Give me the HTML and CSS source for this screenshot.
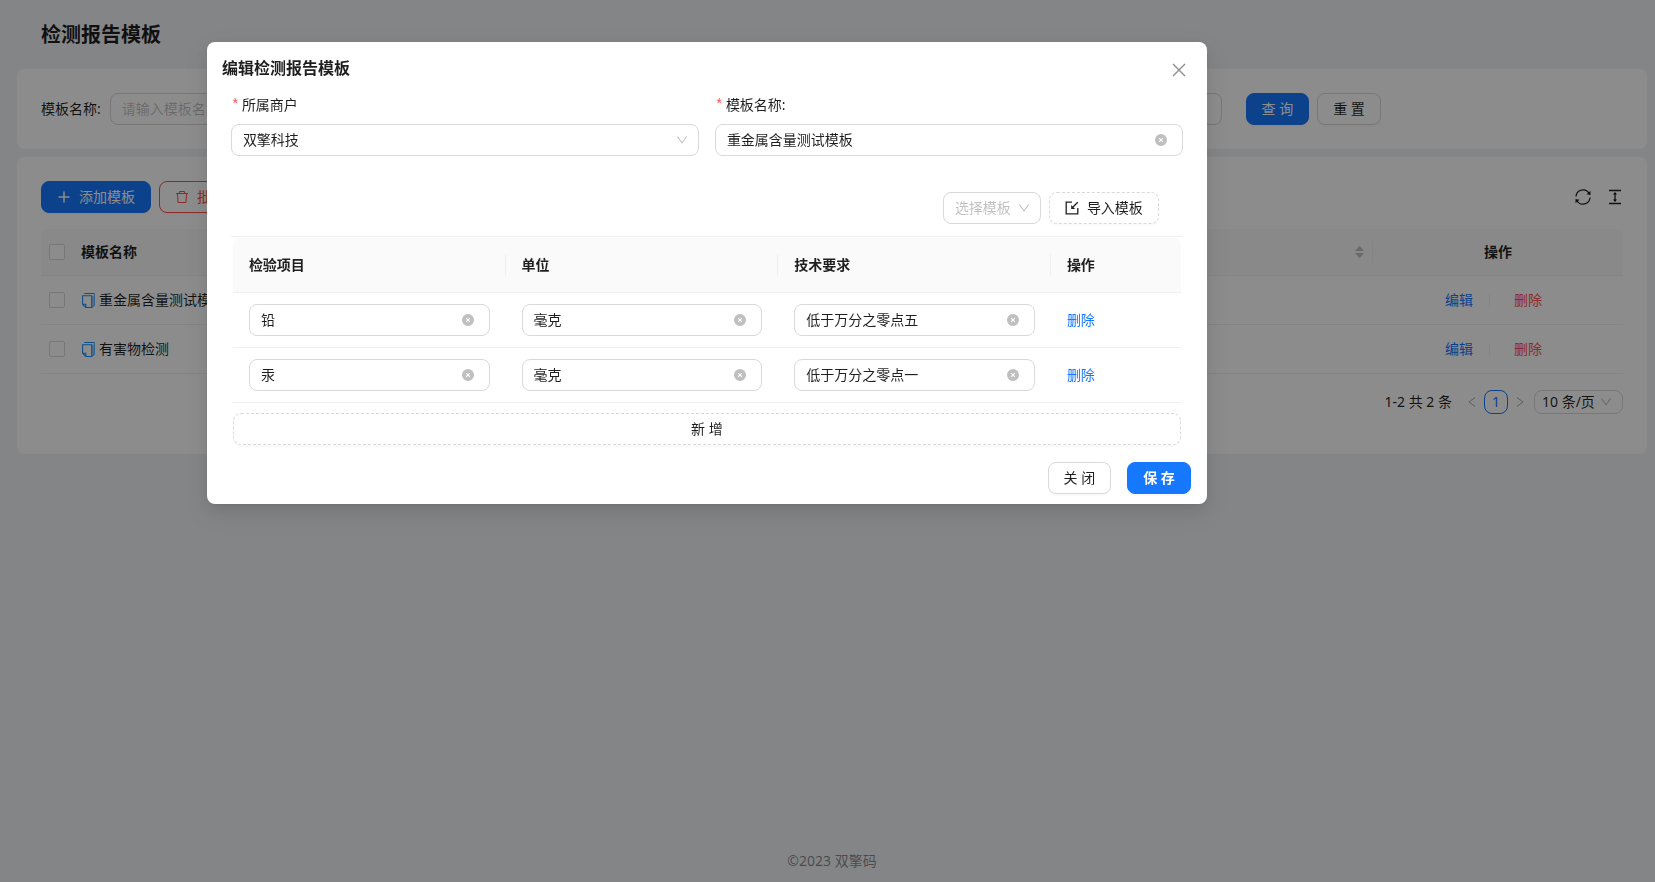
FILE: index.html
```html
<!DOCTYPE html>
<html lang="zh-CN">
<head>
<meta charset="utf-8">
<title>检测报告模板</title>
<link rel="stylesheet" href="styles.css">
</head>
<body>
<svg class="sprite" aria-hidden="true">
  <symbol id="i-down" viewBox="64 64 896 896"><path d="M884 256h-75c-5.100 0-9.900 2.500-12.900 6.600L512 654.200 227.900 262.600c-3-4.100-7.800-6.600-12.900-6.600h-75c-6.500 0-10.300 7.400-6.500 12.700l352.600 486.100c12.800 17.600 39 17.600 51.700 0l352.600-486.100c3.900-5.300.1-12.700-6.400-12.700z"/></symbol>
  <symbol id="i-clear" viewBox="0 0 12 12"><path fill-rule="evenodd" d="M6 0a6 6 0 1 0 0 12A6 6 0 0 0 6 0zM4.400 3.700 6 5.300l1.600-1.600.7.7L6.700 6l1.600 1.600-.7.7L6 6.700 4.400 8.300l-.7-.7L5.300 6 3.700 4.400z"/></symbol>
  <symbol id="i-copy" viewBox="0 0 12 14"><path fill="#a3cffb" d="M9 2.500h2.500v9L9 13.500z"/><path fill="none" stroke="#1890ff" d="M2 .5h9.500M.5 2.500H9v11H3.500l-3-3zM.5 10.500h3v3"/><path fill="none" stroke="#5aaefc" d="M11.500.5v11L9 13.500"/></symbol>
  <symbol id="i-sort" viewBox="0 0 9 12"><path d="M0 5 4.500 0 9 5zM0 7l4.500 5L9 7z"/></symbol>
</svg>

<main class="page">
  <h1 class="page-title">检测报告模板</h1>

  <form class="card search">
    <div class="search-field">
      <label for="q">模板名称:</label>
      <input class="input" id="q" type="text" placeholder="请输入模板名称">
    </div>
    <div class="search-actions">
      <button class="btn btn-primary" type="button">查 询</button>
      <button class="btn" type="button">重 置</button>
    </div>
  </form>

  <section class="card list">
    <div class="toolbar">
      <button class="btn btn-primary btn-icon" type="button">
        <svg class="icon" viewBox="0 0 14 14"><path fill="none" stroke="currentColor" stroke-width="1.500" d="M7 1.500v11M1.500 7h11"/></svg>添加模板</button>
      <button class="btn btn-danger btn-icon" type="button">
        <svg class="icon" viewBox="0 0 14 14"><path fill="none" stroke="currentColor" d="M1 3.500h12M4.500 3.500v-2h5v2M2.500 3.500l.5 9h8l.5-9"/></svg>批量删除</button>
      <div class="tools">
        <button class="tool" type="button" aria-label="刷新"><svg viewBox="0 0 16 16"><path fill="none" stroke="currentColor" stroke-width="1.200" d="M1 7.500A7 7 0 0 1 14 4.300M15 8.500A7 7 0 0 1 2 11.700"/><path fill="currentColor" d="M15.500 2v4l-4-.8zM.5 14v-4l4 .8z"/></svg></button>
        <button class="tool" type="button" aria-label="密度"><svg viewBox="0 0 16 16"><path fill="none" stroke="currentColor" stroke-width="1.300" d="M2 1.500h12M2 14.500h12M8 4v8"/><path fill="currentColor" d="M8 2.900 10 5.500H6zM8 13.100l2-2.600H6z"/></svg></button>
      </div>
    </div>

    <table class="table">
      <colgroup><col class="col-check"><col><col class="col-ops"></colgroup>
      <thead>
        <tr>
          <th class="check"><input type="checkbox" aria-label="全选"></th>
          <th><div class="th-sort">模板名称<svg class="sorter"><use href="#i-sort"/></svg></div></th>
          <th class="th-ops">操作</th>
        </tr>
      </thead>
      <tbody>
        <tr>
          <td class="check"><input type="checkbox" aria-label="选择重金属含量测试模板"></td>
          <td><span class="name"><svg class="copy"><use href="#i-copy"/></svg>重金属含量测试模板</span></td>
          <td><div class="ops"><a href="#">编辑</a><i class="bar"></i><a class="danger" href="#">删除</a></div></td>
        </tr>
        <tr>
          <td class="check"><input type="checkbox" aria-label="选择有害物检测"></td>
          <td><span class="name"><svg class="copy"><use href="#i-copy"/></svg>有害物检测</span></td>
          <td><div class="ops"><a href="#">编辑</a><i class="bar"></i><a class="danger" href="#">删除</a></div></td>
        </tr>
      </tbody>
    </table>

    <nav class="pager" aria-label="分页">
      <span class="total">1-2 共 2 条</span>
      <button class="pg" type="button" aria-label="上一页"><svg viewBox="0 0 12 12"><path fill="none" stroke="currentColor" d="M9 1.500 3 6l6 4.500"/></svg></button>
      <button class="pg current" type="button">1</button>
      <button class="pg" type="button" aria-label="下一页"><svg viewBox="0 0 12 12"><path fill="none" stroke="currentColor" d="M3 1.500 9 6l-6 4.500"/></svg></button>
      <span class="select select-small">
        <select aria-label="每页条数"><option>10 条/页</option></select>
        <svg class="arrow"><use href="#i-down"/></svg>
      </span>
    </nav>
  </section>

  <footer class="footer">©2023 双擎码</footer>
</main>

<div class="mask">
  <div class="modal" role="dialog" aria-modal="true" aria-labelledby="dlg-title">
    <header class="modal-head">
      <h2 id="dlg-title">编辑检测报告模板</h2>
      <button class="close" type="button" aria-label="关闭"><svg viewBox="0 0 14 14"><path fill="none" stroke="currentColor" stroke-width="1.400" d="m1 1 12 12M13 1 1 13"/></svg></button>
    </header>

    <form class="modal-body">
      <div class="fields">
        <div class="field">
          <label for="owner"><span class="req">*</span>所属商户</label>
          <span class="select">
            <select id="owner"><option>双擎科技</option></select>
            <svg class="arrow"><use href="#i-down"/></svg>
          </span>
        </div>
        <div class="field">
          <label for="tname"><span class="req">*</span>模板名称:</label>
          <span class="clearable"><input class="input" id="tname" type="text" value="重金属含量测试模板"><svg class="clear"><use href="#i-clear"/></svg></span>
        </div>
      </div>

      <div class="import">
        <span class="select select-empty">
          <select aria-label="选择模板"><option>选择模板</option></select>
          <svg class="arrow"><use href="#i-down"/></svg>
        </span>
        <button class="btn btn-dashed btn-icon" type="button">
          <svg class="icon" viewBox="0 0 14 14"><path fill="none" stroke="currentColor" stroke-width="1.300" d="M7 1.200H1.200v11.600h11.600V7M12.800 1.200 8 6"/><path fill="currentColor" d="M6.200 4v4h4z"/></svg>导入模板</button>
      </div>

      <div class="editor">
        <table class="table table-edit">
          <colgroup><col><col><col><col class="col-del"></colgroup>
          <thead><tr><th>检验项目</th><th>单位</th><th>技术要求</th><th>操作</th></tr></thead>
          <tbody>
            <tr>
              <td><span class="clearable"><input class="input" type="text" aria-label="检验项目" value="铅"><svg class="clear"><use href="#i-clear"/></svg></span></td>
              <td><span class="clearable"><input class="input" type="text" aria-label="单位" value="毫克"><svg class="clear"><use href="#i-clear"/></svg></span></td>
              <td><span class="clearable"><input class="input" type="text" aria-label="技术要求" value="低于万分之零点五"><svg class="clear"><use href="#i-clear"/></svg></span></td>
              <td><a href="#">删除</a></td>
            </tr>
            <tr>
              <td><span class="clearable"><input class="input" type="text" aria-label="检验项目" value="汞"><svg class="clear"><use href="#i-clear"/></svg></span></td>
              <td><span class="clearable"><input class="input" type="text" aria-label="单位" value="毫克"><svg class="clear"><use href="#i-clear"/></svg></span></td>
              <td><span class="clearable"><input class="input" type="text" aria-label="技术要求" value="低于万分之零点一"><svg class="clear"><use href="#i-clear"/></svg></span></td>
              <td><a href="#">删除</a></td>
            </tr>
          </tbody>
        </table>
        <button class="btn btn-dashed add-row" type="button">新 增</button>
      </div>
    </form>

    <footer class="modal-foot">
      <button class="btn" type="button">关 闭</button>
      <button class="btn btn-primary btn-strong" type="button">保 存</button>
    </footer>
  </div>
</div>
</body>
</html>
```

FILE: styles.css
```css
* { box-sizing: border-box; }

body {
  margin: 0;
  background: #f0f2f5;
  color: rgba(0, 0, 0, .88);
  font: 14px/22px "Noto Sans", "Noto Sans CJK SC", sans-serif;
}

button, input, select { font: inherit; color: inherit; }
a { color: #1677ff; text-decoration: none; }
.sprite { position: absolute; width: 0; height: 0; }

/* Page behind the dialog */
.page {
  display: flex;
  flex-direction: column;
  min-height: 100vh;
  padding: 19px 8px 10px 17px;
}

.page-title { margin: 0 24px 18px; font-size: 20px; line-height: 32px; font-weight: 600; }

.card { background: #fff; border-radius: 8px; padding: 24px; }

.search {
  display: grid;
  grid-template-columns: repeat(4, 1fr);
  gap: 24px;
  margin-bottom: 8px;
}
.search-field { grid-column: span 3; display: flex; align-items: center; gap: 9px; }
.search-field .input { flex: 1; }
.search-actions { display: flex; gap: 8px; }

.input {
  display: block;
  width: 100%;
  height: 32px;
  padding: 0 11px 2px;
  border: 1px solid #d9d9d9;
  border-radius: 8px;
  background: #fff;
  outline: none;
}
.input::placeholder { color: rgba(0, 0, 0, .25); }

.btn {
  height: 32px;
  padding: 0 15px;
  border: 1px solid #d9d9d9;
  border-radius: 8px;
  background: #fff;
  box-shadow: 0 2px 0 rgba(0, 0, 0, .02);
  line-height: 22px;
  white-space: nowrap;
}
.btn-primary { background: #1677ff; border-color: #1677ff; color: #fff; }
.btn-danger { border-color: #ff4d4f; color: #ff4d4f; }
.btn-dashed { border-style: dashed; }
.btn-strong { font-weight: 700; }
.btn-icon { display: inline-flex; align-items: center; gap: 8px; }
.icon { width: 14px; height: 14px; }

.toolbar { display: flex; gap: 8px; margin-bottom: 16px; }
.tools { display: flex; gap: 16px; margin-left: auto; }
.tool { display: grid; place-items: center; width: 16px; padding: 0; border: 0; background: none; }
.tool svg { width: 16px; height: 16px; }

.table { width: 100%; border-collapse: separate; border-spacing: 0; table-layout: fixed; }
.table th, .table td {
  height: 49px;
  padding: 0 8px;
  border-bottom: 1px solid #f0f0f0;
  text-align: left;
}
.table th { position: relative; height: 47px; background: #fafafa; font-weight: 600; }
.table th:first-child { border-top-left-radius: 8px; }
.table th:last-child { border-top-right-radius: 8px; }
.table th:not(:last-child):not(.check)::after {
  content: "";
  position: absolute;
  top: 50%;
  right: 0;
  width: 1px;
  height: 22px;
  margin-top: -11px;
  background: #f0f0f0;
}
.col-check { width: 32px; }
.col-ops { width: 250px; }
.table .th-ops { text-align: center; }
.th-sort { display: flex; align-items: center; justify-content: space-between; padding-right: 1px; }
.sorter { width: 9px; height: 12px; fill: #bfbfbf; }
.check input {
  display: block;
  width: 16px;
  height: 16px;
  margin: 0;
  appearance: none;
  border: 1px solid #d9d9d9;
  border-radius: 2px;
  background: #fff;
}
.name { display: flex; align-items: center; gap: 4px; padding-left: 1px; white-space: nowrap; }
.copy { width: 13px; height: 15px; }
.ops { display: flex; align-items: center; gap: 16px; padding-left: 64px; }
.bar { width: 1px; height: 13px; margin-right: 8px; background: #f0f0f0; }
.danger { color: #ff4d4f; }

.pager { display: flex; align-items: center; justify-content: flex-end; padding: 16px 0; }
.total { margin-right: 8px; }
.pg {
  display: grid;
  place-items: center;
  width: 24px;
  height: 24px;
  padding: 0;
  border: 0;
  border-radius: 8px;
  background: none;
}
.pg svg { width: 12px; height: 12px; color: rgba(0, 0, 0, .35); }
.pg.current { border: 1px solid #1677ff; color: #1677ff; }

.select { position: relative; display: block; }
.select select {
  display: block;
  width: 100%;
  height: 32px;
  padding: 0 32px 0 11px;
  border: 1px solid #d9d9d9;
  border-radius: 8px;
  background: #fff;
  appearance: none;
}
.arrow {
  position: absolute;
  top: 50%;
  right: 11px;
  width: 12px;
  height: 12px;
  margin-top: -6px;
  fill: rgba(0, 0, 0, .25);
  pointer-events: none;
}
.select-small { margin-left: 2px; }
.select-small select { height: 24px; width: 89px; padding: 0 24px 0 7px; }
.select-empty select { width: 98px; padding-right: 24px; color: rgba(0, 0, 0, .25); }

.footer { margin-top: auto; text-align: center; color: rgba(0, 0, 0, .45); }

/* Dialog */
.mask { position: fixed; inset: 0; padding: 42px 0 0 12.5%; background: rgba(0, 0, 0, .45); }

.modal {
  width: 1000px;
  max-width: 100%;
  border-radius: 8px;
  background: #fff;
  box-shadow: 0 6px 16px rgba(0, 0, 0, .08), 0 3px 6px -4px rgba(0, 0, 0, .12), 0 9px 28px 8px rgba(0, 0, 0, .05);
}
.modal-head { display: flex; align-items: flex-end; justify-content: space-between; padding: 14px 21px 0 15px; }
.modal-head h2 { margin: 0; font-size: 16px; line-height: 24px; font-weight: 600; }
.close { padding: 0 0 3px; border: 0; background: none; color: rgba(0, 0, 0, .45); }
.close svg { display: block; width: 14px; height: 14px; }

.modal-body { padding: 14px 24px 0; }
.fields { display: grid; grid-template-columns: 1fr 1fr; gap: 16px; margin-bottom: 36px; }
.field label { display: flex; align-items: center; height: 22px; margin-bottom: 8px; }
.req { width: 11px; color: #ff4d4f; font-family: "Liberation Mono", monospace; }

.clearable { position: relative; display: block; }
.clearable .input { padding-right: 32px; }
.clear { position: absolute; top: 10px; right: 16px; width: 12px; height: 12px; fill: #bfbfbf; }

.import {
  display: flex;
  justify-content: flex-end;
  gap: 8px;
  padding: 0 24px 12px;
  border-bottom: 1px solid #f0f0f0;
}
.editor { padding: 1px 2px 0; }
.table-edit th, .table-edit td { height: 55px; padding: 0 16px; }
.col-del { width: 130px; }
.add-row { display: block; width: 100%; margin-top: 10px; }

.modal-foot { display: flex; justify-content: flex-end; gap: 16px; padding: 17px 16px 10px; }
```
